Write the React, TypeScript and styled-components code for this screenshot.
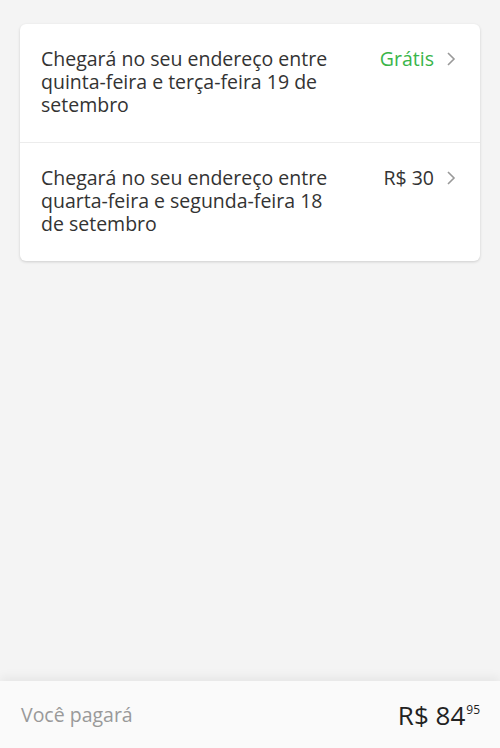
import styled, { createGlobalStyle } from "styled-components";

const GlobalStyle = createGlobalStyle`
  html, body {
    margin: 0;
    padding: 0;
    background: #f4f4f4;
  }
  body {
    font-family: "Open Sans", "Liberation Sans", sans-serif;
    -webkit-font-smoothing: antialiased;
  }
`;

const options = [
  {
    text: "Chegará no seu endereço entre quinta-feira e terça-feira 19 de setembro",
    price: "Grátis",
    free: true,
  },
  {
    text: "Chegará no seu endereço entre quarta-feira e segunda-feira 18 de setembro",
    price: "R$ 30",
    free: false,
  },
];

export default function App() {
  return (
    <Page>
      <GlobalStyle />
      <Content>
        <Card>
          {options.map((o, i) => (
            <OptionRow key={i}>
              <OptionText>{o.text}</OptionText>
              <Price $free={o.free}>{o.price}</Price>
              <Chevron viewBox="0 0 10 16">
                <path d="M2 2l6 6-6 6" />
              </Chevron>
            </OptionRow>
          ))}
        </Card>
      </Content>
      <Footer>
        <FooterLabel>Você pagará</FooterLabel>
        <Total>
          R$ 84<Cents>95</Cents>
        </Total>
      </Footer>
    </Page>
  );
}

const Page = styled.div`
  min-height: 100vh;
  display: flex;
  flex-direction: column;
`;

const Content = styled.main`
  flex: 1;
  padding: 24px 20px;
`;

const Card = styled.section`
  background: #fff;
  border-radius: 6px;
  box-shadow: 0 1px 3px rgba(0, 0, 0, 0.16);
  overflow: hidden;
`;

const OptionRow = styled.div`
  display: flex;
  align-items: flex-start;
  padding: 23px 24px 26px 21px;

  & + & {
    border-top: 1px solid #ececec;
  }
`;

const OptionText = styled.p`
  margin: 0;
  flex: 1;
  max-width: 296px;
  font-size: 19.5px;
  line-height: 23px;
  color: #333;
`;

const Price = styled.span<{ $free: boolean }>`
  margin-left: auto;
  font-size: 19.5px;
  line-height: 23px;
  color: ${(p) => (p.$free ? "#39b54a" : "#333")};
`;

const Chevron = styled.svg`
  width: 10px;
  height: 16px;
  margin: 4px 0 0 12px;
  fill: none;
  stroke: #999;
  stroke-width: 1.6;
`;

const Footer = styled.footer`
  background: #fafafa;
  height: 67px;
  display: flex;
  align-items: center;
  justify-content: space-between;
  padding: 0 20px 0 21px;
  box-shadow: 0 -4px 10px rgba(0, 0, 0, 0.06);
`;

const FooterLabel = styled.span`
  font-size: 19.5px;
  color: #999;
`;

const Total = styled.span`
  font-size: 26px;
  color: #222;
`;

const Cents = styled.sup`
  font-size: 12px;
  vertical-align: 11px;
  margin-left: 1px;
`;
